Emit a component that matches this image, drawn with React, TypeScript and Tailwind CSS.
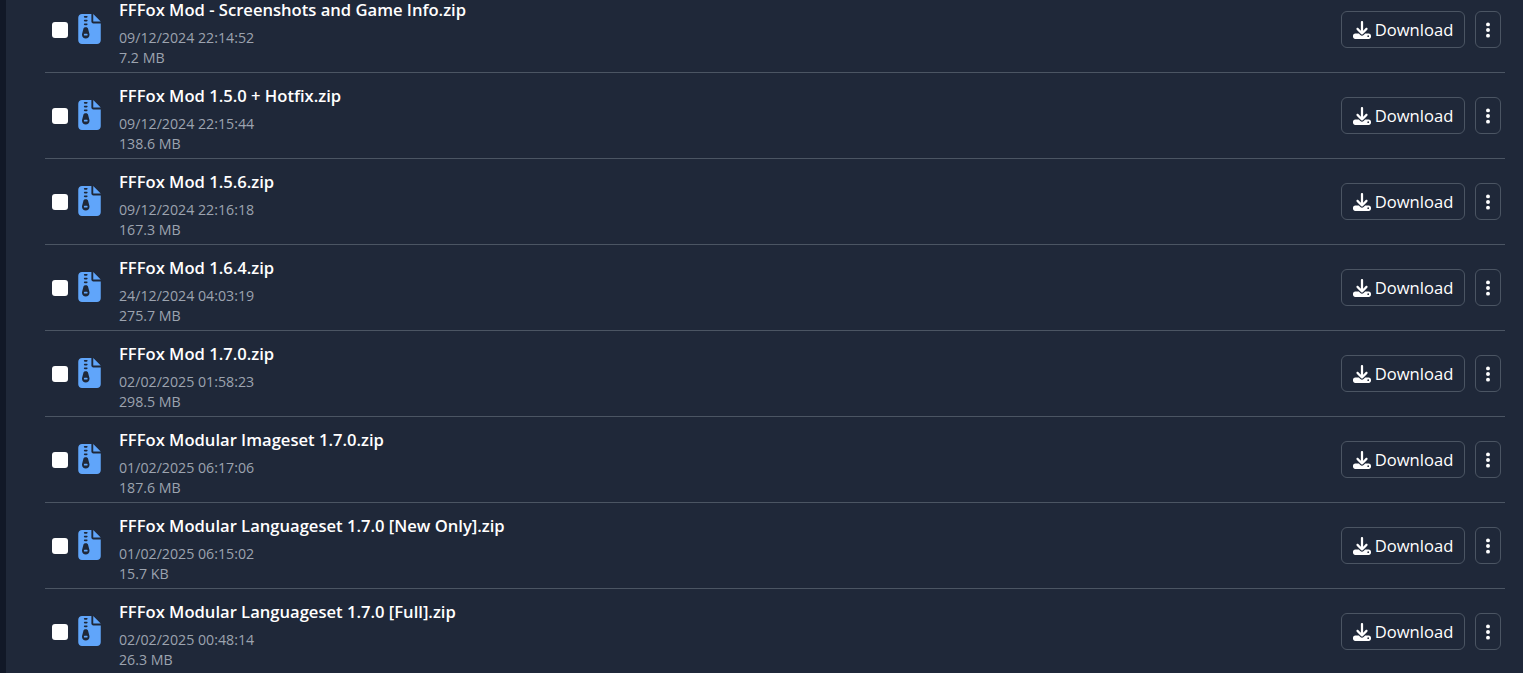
import { FaFileZipper, FaDownload, FaEllipsisVertical } from 'react-icons/fa6';

const files = [
  { name: 'FFFox Mod - Screenshots and Game Info.zip', date: '09/12/2024 22:14:52', size: '7.2 MB' },
  { name: 'FFFox Mod 1.5.0 + Hotfix.zip', date: '09/12/2024 22:15:44', size: '138.6 MB' },
  { name: 'FFFox Mod 1.5.6.zip', date: '09/12/2024 22:16:18', size: '167.3 MB' },
  { name: 'FFFox Mod 1.6.4.zip', date: '24/12/2024 04:03:19', size: '275.7 MB' },
  { name: 'FFFox Mod 1.7.0.zip', date: '02/02/2025 01:58:23', size: '298.5 MB' },
  { name: 'FFFox Modular Imageset 1.7.0.zip', date: '01/02/2025 06:17:06', size: '187.6 MB' },
  { name: 'FFFox Modular Languageset 1.7.0 [New Only].zip', date: '01/02/2025 06:15:02', size: '15.7 KB' },
  { name: 'FFFox Modular Languageset 1.7.0 [Full].zip', date: '02/02/2025 00:48:14', size: '26.3 MB' },
];

export default function App() {
  return (
    <div className="h-[673px] w-full overflow-hidden flex bg-[#111827] font-['Open_Sans','Noto_Sans',sans-serif]">
      <div className="w-[6px] shrink-0" />
      <div className="flex-1 bg-[#1f2839] pl-[39px] pr-[18px]">
        <div className="-mt-[13px]">
          {files.map((f) => (
            <div key={f.name} className="h-[86px] flex items-center border-b border-[#4b5563] pl-[7px] pr-[4px]">
              <input type="checkbox" className="w-[16px] h-[16px] shrink-0 appearance-none bg-white rounded-[3px] mt-[1px]" />
              <FaFileZipper className="w-[23px] h-[30px] ml-[10px] -mt-[2px] shrink-0 text-[#60a5fa]" />
              <div className="ml-[18px] flex-1 min-w-0 mt-[7px]">
                <div className="text-[16.6px] leading-[24px] font-semibold text-white">{f.name}</div>
                <div className="mt-[6px] text-[14.2px] leading-[20px] text-[#9ca3af]">{f.date}</div>
                <div className="text-[14.2px] leading-[20px] text-[#9ca3af]">{f.size}</div>
              </div>
              <button className="w-[124px] h-[37px] pt-[2px] flex items-center justify-center gap-[4px] border border-[#4b5563] rounded-md text-white text-[16.6px]">
                <FaDownload className="w-[18px] h-[18px] -mt-[2px]" />
                Download
              </button>
              <button className="w-[26px] h-[37px] ml-[10px] flex items-center justify-center border border-[#4b5563] rounded-md text-white">
                <FaEllipsisVertical className="w-[18px] h-[18px]" />
              </button>
            </div>
          ))}
        </div>
      </div>
    </div>
  );
}
